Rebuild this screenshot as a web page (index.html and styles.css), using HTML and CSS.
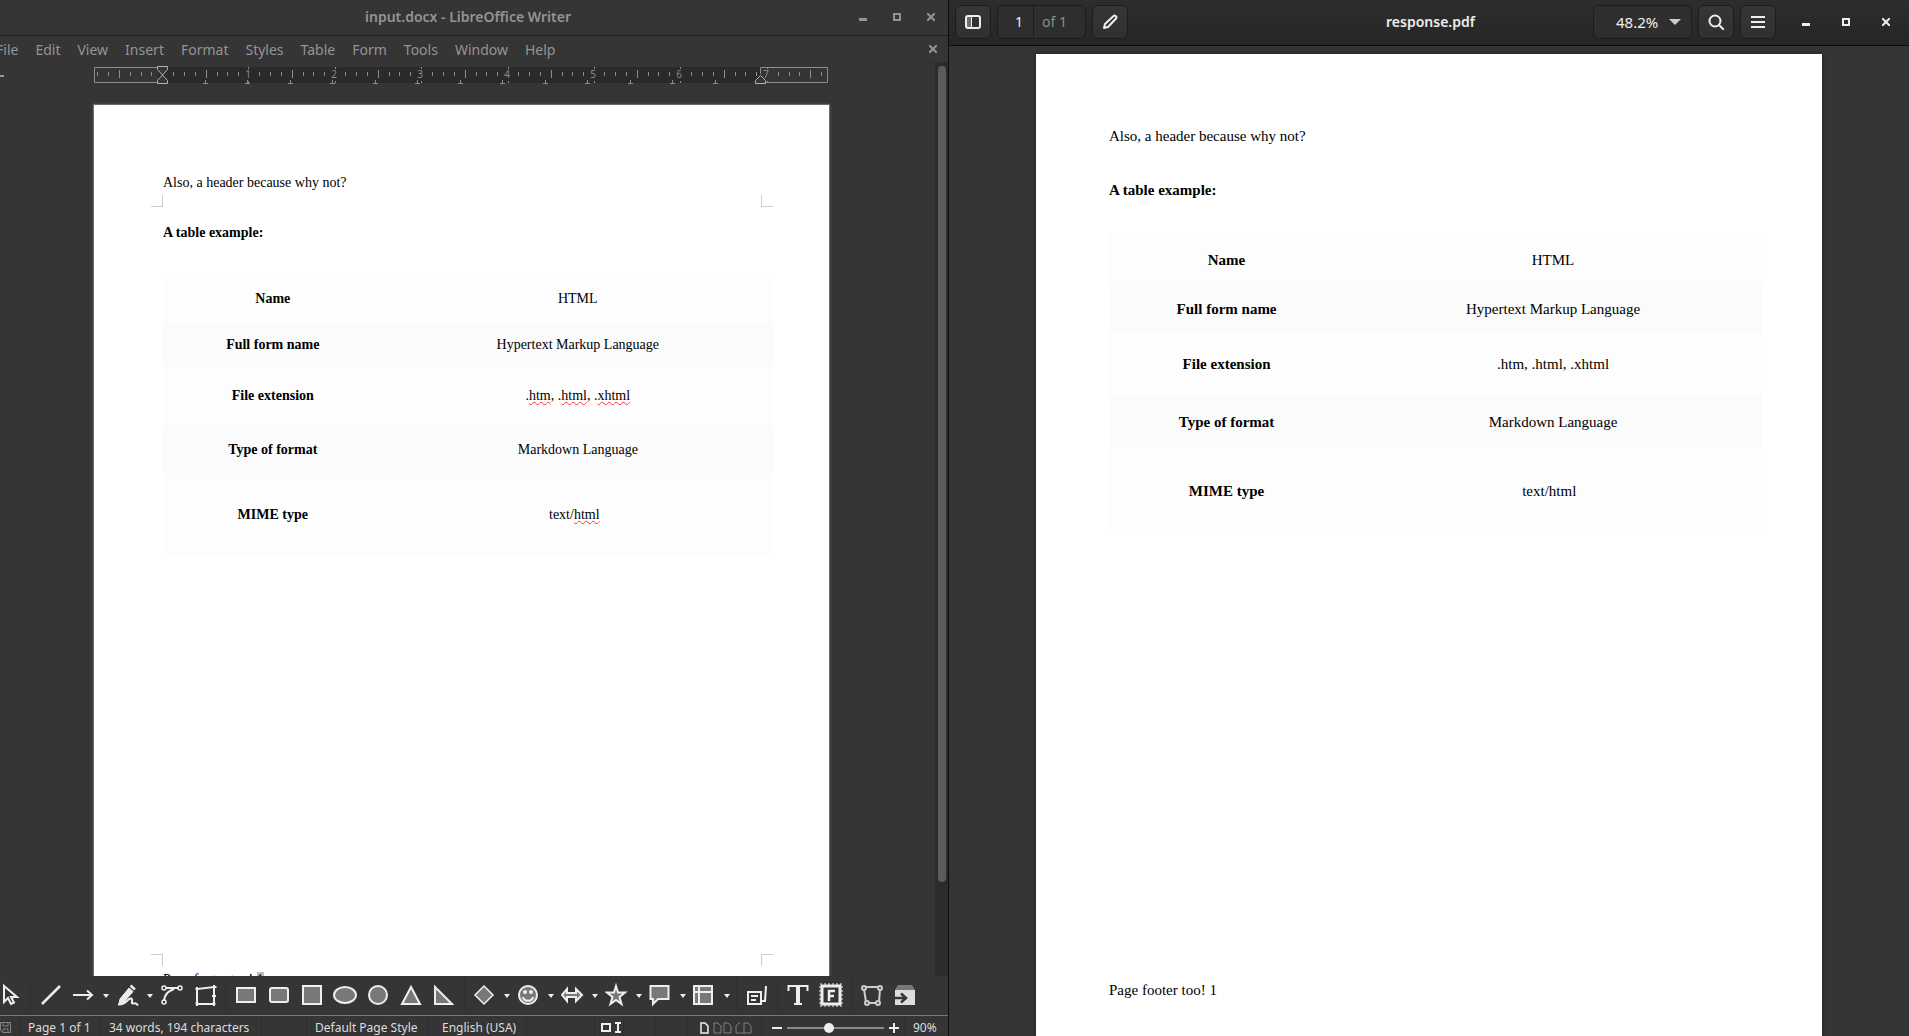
FILE: index.html
```html
<!DOCTYPE html>
<html lang="en">
<head>
<meta charset="utf-8">
<title>input.docx and response.pdf</title>
<link rel="stylesheet" href="styles.css">
</head>
<body>
<main class="desktop">
  <section class="window writer" aria-label="Writer">
    <header class="titlebar">
      <h1 class="title">input.docx - LibreOffice Writer</h1>
      <div class="controls">
        <button class="control" aria-label="Minimize"><svg width="8" height="8"><path d="M0 5h8v3H0z" fill="currentColor"/></svg></button>
        <button class="control" aria-label="Maximize"><svg width="8" height="8"><path d="M1 1h6v6H1z" fill="none" stroke="currentColor" stroke-width="2"/></svg></button>
        <button class="control" aria-label="Close"><svg width="8" height="8"><path d="M0 0l8 8M8 0L0 8" stroke="currentColor" stroke-width="2"/></svg></button>
      </div>
    </header>
    <nav class="menubar">
      <button>File</button><button>Edit</button><button>View</button><button>Insert</button><button>Format</button><button>Styles</button><button>Table</button><button>Form</button><button>Tools</button><button>Window</button><button>Help</button>
      <button class="close-doc" aria-label="Close document"><svg width="8" height="8"><path d="M0 0l8 8M8 0L0 8" stroke="currentColor" stroke-width="2"/></svg></button>
    </nav>
    <div class="workspace">
      <div class="canvas">
        <div class="ruler-row">
          <span class="tab-kind"></span>
          <svg class="ruler" width="736" height="20" fill="none" stroke="#8c8c8c">
            <defs>
              <g id="eighths">
                <path d="M10.5 6v4M21.5 6v4M32.5 6v4M43.5 4v8M54.5 6v4M64.5 6v4M75.5 6v4"/>
              </g>
              <path id="inch" d="M0.5 1v2M0.5 15v2"/>
              <path id="tab" d="M0.5 14v4M-2 17.500h5"/>
            </defs>
            <path d="M64 1h603v16H64z" fill="#2a2a2a" stroke="none"/>
            <path d="M64 1.500H0.500v15H64M666.500 8V1.500h67v15H668"/>
            <path d="M3.500 6v4M14.500 6v4M25.500 4v8M36.500 6v4M47.500 6v4M57.500 6v4"/>
            <use href="#eighths" x="69"/><use href="#eighths" x="155"/><use href="#eighths" x="241"/><use href="#eighths" x="328"/><use href="#eighths" x="414"/><use href="#eighths" x="500"/><use href="#eighths" x="587"/>
            <use href="#inch" x="154"/><use href="#inch" x="241"/><use href="#inch" x="327"/><use href="#inch" x="414"/><use href="#inch" x="500"/><use href="#inch" x="586"/><use href="#inch" x="673"/>
            <path d="M684.500 6v4M695.500 6v4M705.500 6v4M716.500 4v8M727.500 6v4"/>
            <use href="#tab" x="111"/><use href="#tab" x="153"/><use href="#tab" x="196"/><use href="#tab" x="238"/><use href="#tab" x="281"/><use href="#tab" x="323"/><use href="#tab" x="366"/><use href="#tab" x="408"/><use href="#tab" x="451"/><use href="#tab" x="493"/><use href="#tab" x="536"/><use href="#tab" x="578"/><use href="#tab" x="621"/>
            <g stroke="#b5b5b5" fill="#353535">
              <path d="M63.500 0.500h10v3L68.500 9l-5-5.500zM63.500 17.500h10v-3L68.500 9l-5 5.500z"/>
              <path d="M661.500 17.500h10v-3l-5-5-5 5z"/>
            </g>
            <g class="ruler-numbers" stroke="none" fill="#8c8c8c" text-anchor="middle">
              <text x="154" y="12">1</text><text x="240" y="12">2</text><text x="326" y="12">3</text><text x="413" y="12">4</text><text x="499" y="12">5</text><text x="585" y="12">6</text><text x="672" y="12">7</text>
            </g>
          </svg>
        </div>
        <article class="page draft">
          <p class="page-header">Also, a header because why not?</p>
          <div class="page-body">
            <i class="corner tl"></i><i class="corner tr"></i><i class="corner bl"></i><i class="corner br"></i>
            <h2>A table example:</h2>
            <table>
              <tr><th scope="row">Name</th><td>HTML</td></tr>
              <tr><th scope="row">Full form name</th><td>Hypertext Markup Language</td></tr>
              <tr><th scope="row">File extension</th><td>.<span class="typo">htm</span>, .<span class="typo">html</span>, .<span class="typo">xhtml</span></td></tr>
              <tr><th scope="row">Type of format</th><td>Markdown Language</td></tr>
              <tr><th scope="row">MIME type</th><td>text/<span class="typo">html</span>&nbsp;&nbsp;</td></tr>
            </table>
          </div>
          <p class="page-footer">Page footer too! <span class="field">1</span></p>
        </article>
      </div>
      <div class="scrollbar"><div class="thumb"></div></div>
    </div>
    <div class="toolbar">
      <button aria-label="Select"><svg viewBox="0 0 24 24"><path d="M6 3v16l4-4 3 6 3-1.500-3-5.500h6z"/></svg></button>
      <i class="sep"></i>
      <button aria-label="Line"><svg viewBox="0 0 24 24"><path d="M3 21L21 3" stroke-width="2.500"/></svg></button>
      <button aria-label="Arrow line"><svg viewBox="0 0 24 24"><path d="M1 12h19M15 7.500l5 4.500-5 4.500"/></svg></button><button class="caret" aria-label="More lines"></button>
      <button aria-label="Curve"><svg viewBox="0 0 24 24"><path d="M4 16L13 5l4 3.500L8 19l-5 2z" fill="#eee" stroke-width="1"/><path d="M14.500 2.500l4.500 4" stroke-width="2.500"/><path d="M2 21.500c8 1 10-7 13-6s-1 5 2 5c3-1 4 0 5 2"/></svg></button><button class="caret" aria-label="More curves"></button>
      <button aria-label="Connector"><svg viewBox="0 0 24 24"><path d="M4 18C5 10 9 8 14 6M6 5h13"/><g stroke-width="1.500"><circle cx="4" cy="5" r="2"/><circle cx="20" cy="5" r="2"/><circle cx="4" cy="19" r="2"/></g></svg></button>
      <button aria-label="Polygon"><svg viewBox="0 0 24 24"><path d="M4 6l17-2v17H4z"/><path d="M2.500 6h3M4 4v4M19.500 4h4M21 2v5M2.500 20.500h3M4 19v4M19.500 20.500h3M21 19v4M19 13h4" stroke-width="2"/></svg></button>
      <i class="sep"></i>
      <button aria-label="Rectangle"><svg class="solid" viewBox="0 0 24 24"><path d="M3 5h18v14H3z"/></svg></button>
      <button aria-label="Rounded rectangle"><svg class="solid" viewBox="0 0 24 24"><rect x="3" y="5" width="18" height="14" rx="2"/></svg></button>
      <button aria-label="Square"><svg class="solid" viewBox="0 0 24 24"><path d="M3 3h18v18H3z"/></svg></button>
      <button aria-label="Ellipse"><svg class="solid" viewBox="0 0 24 24"><ellipse cx="12" cy="12" rx="11" ry="8"/></svg></button>
      <button aria-label="Circle"><svg class="solid" viewBox="0 0 24 24"><circle cx="12" cy="12" r="9"/></svg></button>
      <button aria-label="Triangle"><svg class="solid" viewBox="0 0 24 24"><path d="M12 4L3 21h18z"/></svg></button>
      <button aria-label="Right triangle"><svg class="solid" viewBox="0 0 24 24"><path d="M3 4v17h17z"/></svg></button>
      <i class="sep"></i>
      <button aria-label="Basic shapes"><svg class="solid" viewBox="0 0 24 24"><path d="M11 3l9 9-9 9-9-9z" stroke-width="1.500"/></svg></button><button class="caret" aria-label="More basic shapes"></button>
      <button aria-label="Symbol shapes"><svg class="solid" viewBox="0 0 24 24"><circle cx="11" cy="12" r="9"/><path d="M6 14c1 5 9 5 10 0"/><circle cx="8" cy="9" r="1"/><circle cx="14" cy="9" r="1"/></svg></button><button class="caret" aria-label="More symbols"></button>
      <button aria-label="Block arrows"><svg class="solid" viewBox="0 0 24 24"><path d="M1 12l5-6v4h9V6l6 6-6 6v-4H6v4z"/></svg></button><button class="caret" aria-label="More arrows"></button>
      <button aria-label="Stars"><svg class="solid" viewBox="0 0 24 24"><path d="M11 3l2 6.500h7L14.500 14l2 7-5.500-4-5.500 4 2-7L2 9.500h7z"/></svg></button><button class="caret" aria-label="More stars"></button>
      <button aria-label="Callouts"><svg class="solid" viewBox="0 0 24 24"><path d="M1.500 3h18v13H9l-5 5v-5H1.500z"/></svg></button><button class="caret" aria-label="More callouts"></button>
      <button aria-label="Flowchart"><svg class="solid" viewBox="0 0 24 24"><path d="M1 3h18v18H1zM1 9h18M6 3v18"/></svg></button><button class="caret" aria-label="More flowchart shapes"></button>
      <i class="sep"></i>
      <button aria-label="Callout box"><svg viewBox="0 0 24 24"><path d="M3 9h13v12H3zM6 13h7M6 17h5M16 18h4l1-15"/></svg></button>
      <i class="sep"></i>
      <button aria-label="Text box"><svg viewBox="0 0 24 24"><path d="M2.500 8V3h19v5M8 21h8"/><path d="M12 3v18" stroke-width="4"/></svg></button>
      <button aria-label="Fontwork"><svg viewBox="0 0 24 24"><path d="M3 3h18v18H3z" stroke-width="3"/><path d="M1 1h22v22H1z" stroke-width="1" stroke-dasharray="2 2"/><path d="M10 18V8h6M10 13h5" stroke-width="2.500"/></svg></button>
      <i class="sep"></i>
      <button aria-label="Edit points"><svg class="dim" viewBox="0 0 24 24"><path d="M6 4h12M4 6l2 13M20 6l-1 13M8 20h9"/><circle cx="4" cy="5" r="2"/><circle cx="20" cy="5" r="2"/><circle cx="7" cy="20" r="2"/><circle cx="18" cy="20" r="2"/></svg></button>
      <button aria-label="Extrusion"><svg viewBox="0 0 24 24"><path d="M5 2h14l3 5H2z" fill="#787878" stroke="none"/><path d="M2 7h20v15H2z" fill="#ddd" stroke="none"/><path d="M2 15h9M8 10.500l5 4.500-5 4.500" stroke="#353535" stroke-width="2.500"/></svg></button>
    </div>
    <footer class="statusbar">
      <span class="cell save"><svg width="12" height="12" fill="none" stroke="#858585"><path d="M0.500 0.500h10v10h-8l-2-2zM3 1v3h5V1M3 10V7h5v3"/></svg></span>
      <span class="cell pages">Page 1 of 1</span>
      <span class="cell words">34 words, 194 characters</span>
      <span class="cell gap"></span>
      <span class="cell style">Default Page Style</span>
      <span class="cell lang">English (USA)</span>
      <span class="cell blank"></span>
      <span class="cell mode"><svg width="22" height="12" fill="none" stroke="#eee" stroke-width="2"><path d="M1 2h8v7H1zM14 1h6M14 10h6M17 1v9"/></svg></span>
      <span class="cell sign"></span>
      <span class="cell sign"></span>
      <span class="cell views"><svg width="52" height="12" fill="none"><path d="M1 1h4l3 3v7H1z" stroke="#eee" stroke-width="1.500"/><path d="M14 1h4l3 3v7h-7zM24 1h4l3 3v7h-7zM40 1h-1l-3 3v7h15V4l-3-3h-4v10" stroke="#808080"/></svg></span>
      <span class="cell zoomer">
        <button aria-label="Zoom out"><svg width="10" height="10"><path d="M0 5h10" stroke="#eee" stroke-width="2"/></svg></button>
        <input type="range" min="0" max="100" value="43" aria-label="Zoom">
        <button aria-label="Zoom in"><svg width="10" height="10"><path d="M0 5h10M5 0v10" stroke="#eee" stroke-width="2"/></svg></button>
      </span>
      <span class="cell percent">90%</span>
    </footer>
  </section>

  <section class="window viewer" aria-label="Document viewer">
    <header class="headerbar">
      <div class="group">
        <button class="tool" aria-label="Side pane"><svg width="16" height="14"><path d="M1 2h5v10H1z" fill="#707070"/><rect x="1" y="1" width="14" height="12" rx="2" fill="none" stroke="#eee" stroke-width="2"/><path d="M6.500 1v12" stroke="#eee"/></svg></button>
        <div class="pager"><input type="text" value="1" aria-label="Page number"><span>of 1</span></div>
        <button class="tool" aria-label="Annotate"><svg width="16" height="16"><path d="M2 14l1-4 8.500-8q1-1 2 0l.5.500q1 1 0 2L6 13z" fill="none" stroke="#eee" stroke-width="2" stroke-linejoin="round"/></svg></button>
      </div>
      <h1 class="title">response.pdf</h1>
      <div class="group end">
        <div class="zoom-select">
          <select aria-label="Zoom level"><option>48.2%</option></select>
          <svg width="12" height="6"><path d="M0 0h12L6 6z" fill="#ccc"/></svg>
        </div>
        <button class="tool" aria-label="Search"><svg width="16" height="16" fill="none" stroke="#eee" stroke-width="2"><circle cx="7" cy="7" r="5.500"/><path d="M11 11l5 5"/></svg></button>
        <button class="tool" aria-label="Menu"><svg width="14" height="12"><path d="M0 1h14M0 6h14M0 11h14" stroke="#eee" stroke-width="2"/></svg></button>
        <div class="controls">
          <button class="control" aria-label="Minimize"><svg width="8" height="8"><path d="M0 5h8v3H0z" fill="currentColor"/></svg></button>
          <button class="control" aria-label="Maximize"><svg width="8" height="8"><path d="M1 1h6v6H1z" fill="none" stroke="currentColor" stroke-width="2"/></svg></button>
          <button class="control" aria-label="Close"><svg width="8" height="8"><path d="M0 0l8 8M8 0L0 8" stroke="currentColor" stroke-width="2"/></svg></button>
        </div>
      </div>
    </header>
    <div class="viewport">
      <article class="page final">
        <p class="page-header">Also, a header because why not?</p>
        <div class="page-body">
          <h2>A table example:</h2>
          <table>
            <tr><th scope="row">Name</th><td>HTML</td></tr>
            <tr><th scope="row">Full form name</th><td>Hypertext Markup Language</td></tr>
            <tr><th scope="row">File extension</th><td>.htm, .html, .xhtml</td></tr>
            <tr><th scope="row">Type of format</th><td>Markdown Language</td></tr>
            <tr><th scope="row">MIME type</th><td>text/html&nbsp;&nbsp;</td></tr>
          </table>
        </div>
        <p class="page-footer">Page footer too! 1</p>
      </article>
    </div>
  </section>
</main>
</body>
</html>
```
FILE: styles.css
```css
* { box-sizing: border-box; }
body {
  margin: 0;
  background: #353535;
  color: #ddd;
  font: 14px/20px "Noto Sans", "Open Sans", sans-serif;
}
h1, h2, p { margin: 0; font-size: inherit; }
button, input, select {
  margin: 0;
  padding: 0;
  border: 0;
  background: none;
  color: inherit;
  font: inherit;
}
svg { display: block; flex: none; }

.desktop {
  display: grid;
  grid-template-columns: 949fr 960fr;
  height: 100vh;
}
.window {
  display: flex;
  flex-direction: column;
  min-width: 0;
  min-height: 0;
  overflow: hidden;
}
.title { font-weight: 600; }
.controls { display: flex; }
.control { display: grid; place-items: center; }

/* Writer window */
.writer { border-right: 1px solid #0c0c0c; color: #949494; }
.titlebar {
  display: grid;
  grid-template-columns: 90px 1fr 102px;
  align-items: center;
  flex: none;
  height: 36px;
  padding-bottom: 2px;
  border-bottom: 1px solid #1e1e1e;
}
.titlebar .title { grid-column: 2; text-align: center; }
.titlebar .control { width: 34px; height: 34px; }
.menubar {
  display: flex;
  flex: none;
  gap: 17px;
  height: 27px;
  margin-left: -4px;
  padding-right: 11px;
  border-bottom: 1px solid #303030;
}
.menubar button { padding-top: 2px; }
.menubar .close-doc { margin-left: auto; padding-top: 0; }
.workspace { display: flex; flex: 1; min-height: 0; }
.canvas { flex: 1; min-width: 0; overflow: hidden; }
.ruler-row {
  display: flex;
  align-items: center;
  gap: 90px;
  height: 26px;
}
.tab-kind { flex: none; width: 4px; height: 2px; background: #999; }
.ruler-numbers { font-size: 10px; }
.scrollbar {
  width: 13px;
  padding: 3px 2px 3px 3px;
  background: #2c2c2c;
}
.thumb { height: 90%; border-radius: 4px; background: #5b5b59; }

/* Document pages */
.page {
  background: #fff;
  color: #000;
  font-family: "Liberation Serif", "Times New Roman", serif;
}
.page table { border-collapse: collapse; table-layout: fixed; }
.page th { width: 36%; }
.page td, .page th { padding: 0; text-align: center; vertical-align: middle; }
.page tr:nth-child(odd) { background: #fdfdfd; }
.page tr:nth-child(even) { background: #fbfbfb; }

.draft {
  margin: 15px 105px 0 93px;
  padding: 70px 68px 60px 69px;
  border: 1px solid #6a6a6a;
  box-shadow: 0 0 3px #555;
  font-size: 14px;
  line-height: 16px;
}
.draft .page-body {
  position: relative;
  min-height: 747px;
  margin-top: 16px;
  padding-top: 18px;
}
.draft table { width: calc(100% + 12px); margin-top: 33px; }
.draft tr { height: 49px; }
.draft tr:nth-child(2) { height: 43px; }
.draft tr:nth-child(3) { height: 59px; }
.draft tr:nth-child(5) { height: 81px; }
.draft .page-footer { margin-top: 18px; }
.field { background: #c0c0c0; }
.typo { text-decoration: underline wavy #f33 1px; text-underline-offset: 1px; }
.corner { position: absolute; width: 12px; height: 12px; border: 0 solid #ccc; }
.tl { right: 100%; bottom: 100%; border-width: 0 1px 1px 0; }
.tr { left: 100%; bottom: 100%; border-width: 0 0 1px 1px; }
.bl { right: 100%; top: 100%; border-width: 1px 1px 0 0; }
.br { left: 100%; top: 100%; border-width: 1px 0 0 1px; }

/* Drawing toolbar */
.toolbar {
  display: flex;
  flex: none;
  align-items: center;
  height: 39px;
  margin-left: -7px;
  padding-bottom: 2px;
}
.toolbar button { display: grid; place-items: center; flex: none; width: 33px; height: 33px; }
.toolbar svg { width: 24px; height: 24px; fill: none; stroke: #eee; stroke-width: 2; }
.toolbar .solid { fill: #787878; }
.toolbar .dim { stroke: #ccc; }
.toolbar .caret { width: 11px; }
.caret::before {
  content: "";
  margin-top: 3px;
  border: 3px solid transparent;
  border-top: 4px solid #eee;
  border-bottom: 0;
}
.sep { flex: none; width: 1px; height: 33px; margin: 0 3px 0 4px; background: #2f2f2f; }

/* Status bar */
.statusbar {
  display: flex;
  flex: none;
  height: 21px;
  border-top: 1px solid #777;
  color: #ddd;
  font-size: 12px;
  line-height: 24px;
  white-space: nowrap;
}
.cell {
  flex: none;
  height: 20px;
  padding-left: 8px;
  border-right: 1px solid #2f2f2f;
}
.cell svg { margin-top: 6px; }
.save { width: 20px; padding-left: 0; }
.pages { width: 81px; }
.words { width: 161px; }
.gap { width: 45px; }
.style { width: 122px; }
.lang { width: 98px; padding-left: 13px; }
.blank { width: 68px; }
.mode { width: 29px; padding-left: 6px; }
.sign { width: 32px; }
.views { flex: 1; padding-left: 12px; }
.zoomer { display: flex; align-items: center; gap: 5px; width: 143px; padding-left: 10px; }
.zoomer svg { margin-top: 4px; }
.zoomer input {
  width: 97px;
  height: 10px;
  margin-top: 4px;
  appearance: none;
  background: linear-gradient(#888, #888) center / 100% 2px no-repeat;
}
.zoomer input::-webkit-slider-thumb {
  appearance: none;
  width: 10px;
  height: 10px;
  border-radius: 50%;
  background: #eee;
}
.percent { width: 43px; border-right: 0; }

/* Viewer window */
.headerbar {
  display: grid;
  grid-template-columns: 1fr auto 1fr;
  align-items: center;
  flex: none;
  height: 46px;
  padding: 0 3px 2px 6px;
  border-bottom: 1px solid #0c0c0c;
  background: linear-gradient(#2d2d2d, #262626);
  color: #eee;
}
.group { display: flex; gap: 6px; }
.end { justify-content: flex-end; }
.tool {
  display: grid;
  place-items: center;
  width: 36px;
  height: 34px;
  border: 1px solid #1c1c1c;
  border-radius: 6px;
  background: linear-gradient(#363636, #303030);
}
.pager, .zoom-select {
  display: flex;
  align-items: center;
  height: 34px;
  border: 1px solid #1c1c1c;
  border-radius: 6px;
  background: #2e2e2e;
}
.pager { width: 89px; color: #8c8c8c; }
.pager input {
  width: 36px;
  height: 32px;
  padding-right: 10px;
  border-right: 1px solid #1c1c1c;
  color: #eee;
  text-align: right;
}
.pager span { padding-left: 8px; }
.zoom-select { gap: 10px; width: 99px; padding-left: 22px; }
.zoom-select select { appearance: none; font-size: 15px; }
.viewer .controls { padding-left: 4px; }
.viewer .control { width: 40px; height: 34px; }
.viewport { flex: 1; min-height: 0; padding: 8px 87px 0; overflow: hidden; }
.final {
  min-height: 1017px;
  padding: 73px 73px 60px;
  box-shadow: 0 0 4px #222;
  font-size: 15px;
  line-height: 18px;
}
.final .page-body { min-height: 800px; margin-top: 36px; }
.final table { width: calc(100% + 13px); margin-top: 34px; }
.final tr { height: 53px; }
.final tr:nth-child(2) { height: 46px; }
.final tr:nth-child(3) { height: 63px; }
.final tr:nth-child(5) { height: 86px; }
```
